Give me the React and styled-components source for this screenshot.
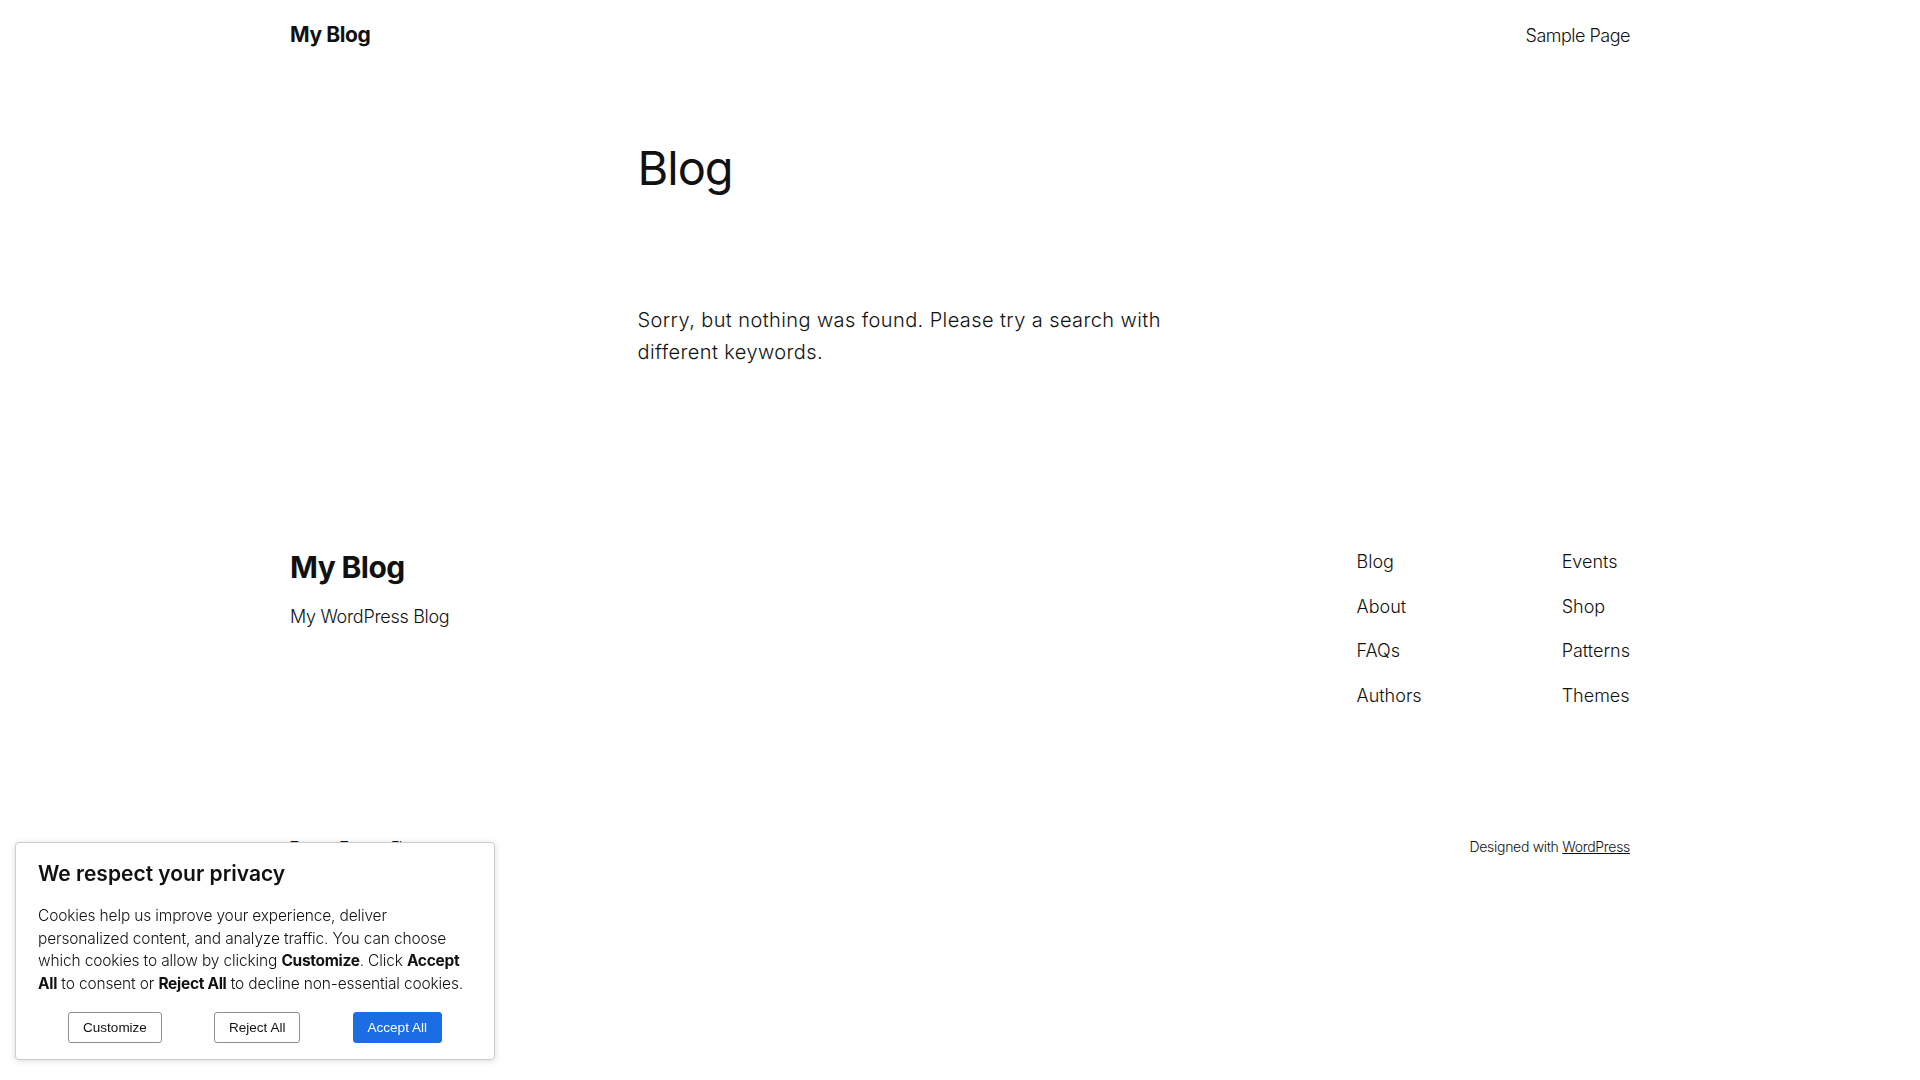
import React from "react";
import styled, { createGlobalStyle } from "styled-components";

const GlobalStyle = createGlobalStyle`
  html, body {
    margin: 0;
    padding: 0;
    background: #ffffff;
  }
  body {
    font-family: Inter, "Noto Sans", sans-serif;
    color: #111111;
    -webkit-font-smoothing: antialiased;
  }
  * { box-sizing: border-box; }
`;

const Page = styled.div`
  min-height: 1080px;
  display: flex;
  flex-direction: column;
`;

const Wide = styled.div`
  width: 1340px;
  margin: 0 auto;
`;

const Header = styled(Wide)`
  height: 70px;
  display: flex;
  align-items: center;
  justify-content: space-between;
`;

const SiteTitle = styled.a`
  font-size: ${(p) => (p.big ? "30px" : "21px")};
  font-weight: 700;
  letter-spacing: ${(p) => (p.big ? "-0.6px" : "-0.4px")};
  line-height: 1.2;
  color: #111111;
  text-decoration: none;
`;

const NavLink = styled.a`
  font-size: 18px;
  font-weight: 300;
  letter-spacing: ${(p) => (p.tight ? "-0.5px" : "0")};
  line-height: 27px;
  color: #111111;
  text-decoration: none;
`;

const Main = styled.main`
  width: 645px;
  margin: 70px auto 0;
`;

const Heading = styled.h1`
  margin: 0;
  font-size: 47px;
  font-weight: 400;
  letter-spacing: -1px;
  line-height: 1.2;
`;

const Message = styled.p`
  margin: 108px 0 0;
  max-width: 570px;
  font-size: 20px;
  font-weight: 300;
  letter-spacing: 0.4px;
  line-height: 32px;
`;

const Footer = styled(Wide)`
  margin-top: 180px;
`;

const FooterTop = styled.div`
  display: flex;
  justify-content: space-between;
  align-items: flex-start;
`;

const Brand = styled.div`
  display: flex;
  flex-direction: column;
  gap: 18px;
  padding-top: 1px;
`;

const Tagline = styled.p`
  margin: 0;
  font-size: 18px;
  font-weight: 300;
  letter-spacing: -0.3px;
  line-height: 27px;
`;

const FooterNav = styled.nav`
  display: flex;
  gap: 140px;
`;

const NavColumn = styled.div`
  display: flex;
  flex-direction: column;
  gap: 17.4px;
`;

const FooterBottom = styled.div`
  margin-top: 127px;
  display: flex;
  justify-content: space-between;
  font-size: 14px;
  font-weight: 300;
  letter-spacing: -0.3px;
  line-height: 21px;
`;

const SmallText = styled.p`
  margin: 0;

  a {
    color: #111111;
    text-decoration: underline;
  }
`;

const Banner = styled.div`
  position: fixed;
  left: 15px;
  bottom: 20px;
  width: 480px;
  padding: 17px 22px 16px;
  background: #ffffff;
  border: 1px solid #c9ccd1;
  border-radius: 4px;
  box-shadow: 0 1px 6px rgba(0, 0, 0, 0.15);
`;

const BannerTitle = styled.h2`
  margin: 0;
  font-size: 21px;
  font-weight: 600;
  letter-spacing: 0;
  line-height: 1.3;
`;

const BannerText = styled.p`
  margin: 18px 0 0;
  font-size: 15.5px;
  font-weight: 300;
  letter-spacing: -0.15px;
  line-height: 22.4px;

  b {
    font-weight: 700;
    letter-spacing: -0.3px;
  }
`;

const Actions = styled.div`
  margin-top: 17px;
  padding: 0 4px;
  display: flex;
  justify-content: space-around;
`;

const Button = styled.button`
  height: 31px;
  padding: 0 14px;
  font-family: "Liberation Sans", Arial, sans-serif;
  font-size: 13.5px;
  border-radius: 3px;
  cursor: pointer;
  border: 1px solid ${(p) => (p.primary ? "#1a6de3" : "#8c8f94")};
  background: ${(p) => (p.primary ? "#1a6de3" : "#ffffff")};
  color: ${(p) => (p.primary ? "#ffffff" : "#111111")};
`;

const leftLinks = ["Blog", "About", "FAQs", "Authors"];
const rightLinks = ["Events", "Shop", "Patterns", "Themes"];

export default function App() {
  return (
    <Page>
      <GlobalStyle />
      <Header>
        <SiteTitle href="#">My Blog</SiteTitle>
        <NavLink tight href="#">Sample Page</NavLink>
      </Header>

      <Main>
        <Heading>Blog</Heading>
        <Message>
          Sorry, but nothing was found. Please try a search with different keywords.
        </Message>
      </Main>

      <Footer>
        <FooterTop>
          <Brand>
            <SiteTitle big href="#">My Blog</SiteTitle>
            <Tagline>My WordPress Blog</Tagline>
          </Brand>
          <FooterNav>
            <NavColumn>
              {leftLinks.map((l) => (
                <NavLink key={l} href="#">{l}</NavLink>
              ))}
            </NavColumn>
            <NavColumn>
              {rightLinks.map((l) => (
                <NavLink key={l} href="#">{l}</NavLink>
              ))}
            </NavColumn>
          </FooterNav>
        </FooterTop>
        <FooterBottom>
          <SmallText>Twenty Twenty-Five</SmallText>
          <SmallText>
            Designed with <a href="#">WordPress</a>
          </SmallText>
        </FooterBottom>
      </Footer>

      <Banner>
        <BannerTitle>We respect your privacy</BannerTitle>
        <BannerText>
          Cookies help us improve your experience, deliver personalized content, and
          analyze traffic. You can choose which cookies to allow by clicking{" "}
          <b>Customize</b>. Click <b>Accept All</b> to consent or <b>Reject All</b> to
          decline non-essential cookies.
        </BannerText>
        <Actions>
          <Button>Customize</Button>
          <Button>Reject All</Button>
          <Button primary>Accept All</Button>
        </Actions>
      </Banner>
    </Page>
  );
}
